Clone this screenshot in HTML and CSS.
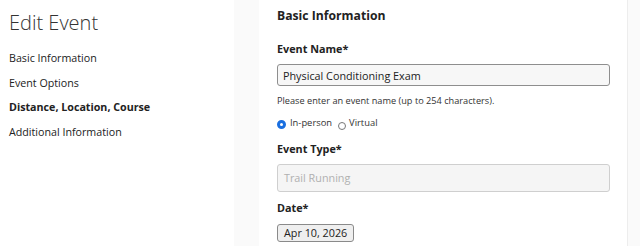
FILE: index.html
```html
<!DOCTYPE html>
<html lang="en">
<head>
    <meta charset="UTF-8">
    <title>Edit Event</title>
    <link rel="stylesheet" href="styles.css">
</head>
<body>
    <div class="page">
        <!-- Sidebar -->
        <aside class="sidebar">
            <h1>Edit Event</h1>
            <nav class="side-nav">
                <a href="#basic">Basic Information</a>
                <a href="#options">Event Options</a>
                <a href="#distance" class="active">Distance, Location, Course</a>
                <a href="#additional">Additional Information</a>
            </nav>
        </aside>

        <!-- Main -->
        <main class="main">
            <section class="card">
                <h2>Basic Information</h2>

                <div class="field">
                    <label for="event-name">Event Name*</label>
                    <input type="text" id="event-name" class="text-input" value="Physical Conditioning Exam">
                    <p class="help">Please enter an event name (up to 254 characters).</p>
                    <div class="radios">
                        <label class="radio"><span class="dot checked"></span>In-person</label>
                        <label class="radio"><span class="dot"></span>Virtual</label>
                    </div>
                </div>

                <div class="field">
                    <label for="event-type">Event Type*</label>
                    <div class="select-input" id="event-type">Trail Running</div>
                </div>

                <div class="field">
                    <label for="date">Date*</label>
                    <button type="button" class="date-button" id="date">Apr 10, 2026</button>
                </div>
            </section>
        </main>
    </div>
</body>
</html>
```

FILE: styles.css
```css
body, html {
    margin: 0;
    padding: 0;
    height: 100%;
    font-family: 'Open Sans', sans-serif;
    color: #222;
    background-color: #fafafa;
}

.page {
    display: flex;
    min-height: 100vh;
}

.sidebar {
    width: 234px;
    background-color: white;
    padding: 8px 0 0 9px;
    box-sizing: border-box;
}

.sidebar h1 {
    font-size: 20px;
    font-weight: 300;
    color: #333;
    margin: 0 0 8px;
    line-height: 30px;
}

.side-nav {
    display: flex;
    flex-direction: column;
}

.side-nav a {
    font-size: 10.7px;
    color: #222;
    text-decoration: none;
    line-height: 24.7px;
}

.side-nav a.active {
    font-weight: 700;
}

.main {
    flex: 1;
    padding: 0 12px 0 25px;
}

.card {
    background-color: white;
    border-right: 1px solid #ededed;
    padding: 5px 17px 0 18px;
    min-height: 246px;
    box-sizing: border-box;
}

.card h2 {
    font-size: 12.2px;
    font-weight: 700;
    margin: 0 0 12px;
    line-height: 22px;
}

.field {
    display: flex;
    flex-direction: column;
    align-items: flex-start;
}

.field > label {
    font-size: 10.8px;
    font-weight: 700;
    line-height: 20px;
    margin-bottom: 5px;
}

.text-input {
    width: 100%;
    height: 22px;
    box-sizing: border-box;
    border: 1px solid #8e8e8e;
    border-radius: 3px;
    background-color: #f7f7f7;
    padding: 0 5px;
    font-family: 'Open Sans', sans-serif;
    font-size: 10.8px;
    color: #222;
}

.help {
    font-size: 9.2px;
    color: #333;
    margin: 7px 0 0;
    line-height: 16px;
}

.radios {
    display: flex;
    gap: 6px;
    margin-top: 6px;
    margin-bottom: 8px;
}

.radio {
    display: flex;
    align-items: center;
    font-size: 9.4px;
    color: #333;
    line-height: 16px;
}

.dot {
    width: 8px;
    height: 8px;
    border: 1px solid #777;
    border-radius: 50%;
    margin-right: 3px;
    margin-top: 5px;
    box-sizing: border-box;
}

.dot.checked {
    border: 3px solid #1a6fe0;
    background-color: white;
    width: 9px;
    height: 9px;
    margin-top: 2px;
    margin-right: 4px;
}

.select-input {
    width: 100%;
    height: 28px;
    box-sizing: border-box;
    border: 1px solid #cfcfcf;
    border-radius: 3px;
    background-color: #f5f5f5;
    padding: 0 6px;
    font-size: 10.8px;
    color: #b0b0b0;
    line-height: 26px;
    margin-bottom: 6px;
}

.date-button {
    font-family: 'Open Sans', sans-serif;
    font-size: 10.8px;
    color: #222;
    background-color: #efefef;
    border: 1px solid #8a8a8a;
    border-radius: 3px;
    padding: 0 6px;
    height: 18px;
    line-height: 16px;
    margin-top: 1px;
}
```
